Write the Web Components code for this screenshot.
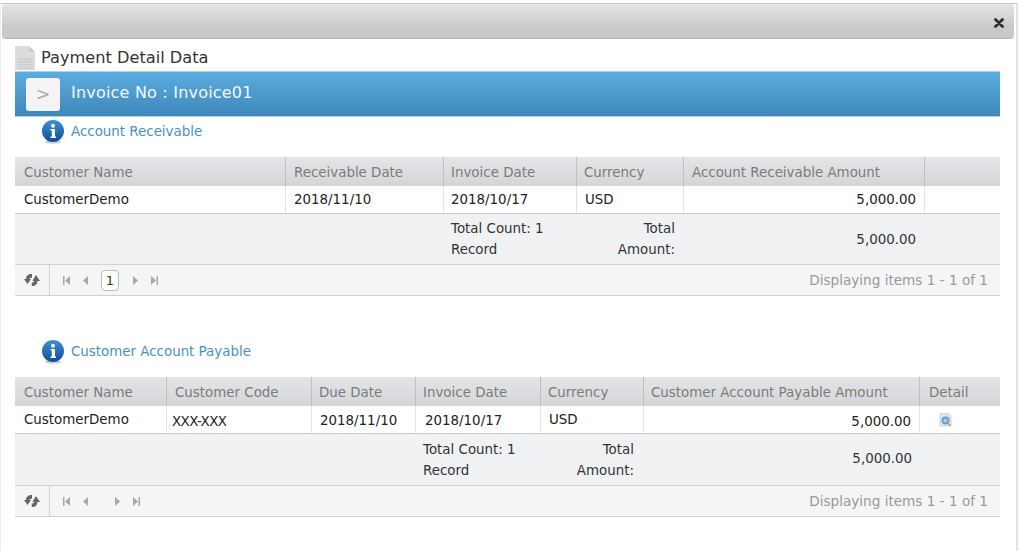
<!DOCTYPE html>
<html><head><meta charset="utf-8"><style>
html,body{margin:0;padding:0;background:#fff;height:100%;overflow:hidden}
body{font-family:"DejaVu Sans",sans-serif}
</style></head><body>
<x-dialog>
  <x-doc-title>Payment Detail Data</x-doc-title>
  <x-invoice-bar>Invoice No : Invoice01</x-invoice-bar>
  <x-section style="--top:3px;--h:24px">Account Receivable</x-section>
  <x-grid cols="271px 158px 133px 107px 241px 75px" style="--gtop:13px">
    <x-row kind="head"><x-cell style="--pl:9px">Customer Name</x-cell><x-cell>Receivable Date</x-cell><x-cell style="--pl:7px">Invoice Date</x-cell><x-cell style="--pl:7px">Currency</x-cell><x-cell>Account Receivable Amount</x-cell><x-cell></x-cell></x-row>
    <x-row kind="body"><x-cell style="--pl:9px">CustomerDemo</x-cell><x-cell>2018/11/10</x-cell><x-cell style="--pl:7px">2018/10/17</x-cell><x-cell>USD</x-cell><x-cell align="right">5,000.00</x-cell><x-cell></x-cell></x-row>
    <x-row kind="foot"><x-cell></x-cell><x-cell></x-cell><x-cell style="--pl:7px">Total Count: 1 Record</x-cell><x-cell align="right">Total Amount:</x-cell><x-cell align="right" mid>5,000.00</x-cell><x-cell></x-cell></x-row>
    <x-pager page="1">Displaying items 1 - 1 of 1</x-pager>
  </x-grid>
  <x-section style="--top:44px;--h:24px">Customer Account Payable</x-section>
  <x-grid cols="152px 145px 104px 125px 103px 276px 80px" style="--gtop:13px">
    <x-row kind="head"><x-cell style="--pl:9px">Customer Name</x-cell><x-cell>Customer Code</x-cell><x-cell style="--pl:7px">Due Date</x-cell><x-cell style="--pl:7px">Invoice Date</x-cell><x-cell style="--pl:7px">Currency</x-cell><x-cell style="--pl:7px">Customer Account Payable Amount</x-cell><x-cell style="--pl:9px">Detail</x-cell></x-row>
    <x-row kind="body"><x-cell style="--pl:9px">CustomerDemo</x-cell><x-cell style="--nudge:2px;--pl:5px;--ls:-.6px">XXX-XXX</x-cell><x-cell style="--nudge:1px">2018/11/10</x-cell><x-cell style="--nudge:1px;--pl:9px">2018/10/17</x-cell><x-cell>USD</x-cell><x-cell align="right" style="--nudge:2px">5,000.00</x-cell><x-cell><x-detail-icon></x-detail-icon></x-cell></x-row>
    <x-row kind="foot" style="height:51px"><x-cell></x-cell><x-cell></x-cell><x-cell></x-cell><x-cell style="--pl:7px;--nudge:1px">Total Count: 1 Record</x-cell><x-cell align="right" style="--pr:9px;--nudge:1px">Total Amount:</x-cell><x-cell align="right" mid style="--pr:7px;--mt:16px">5,000.00</x-cell><x-cell></x-cell></x-row>
    <x-pager>Displaying items 1 - 1 of 1</x-pager>
  </x-grid>
</x-dialog>
<script>
function def(name, html, extra){
  const t=document.createElement('template');t.innerHTML=html;
  customElements.define(name,class extends HTMLElement{
    constructor(){super();this.attachShadow({mode:'open'}).appendChild(t.content.cloneNode(true));}
    connectedCallback(){extra&&extra(this);}
  });
}
def('x-dialog',`<style>
:host{display:block;box-sizing:border-box;width:1018px;height:548px;margin-top:3px;border-top:1px solid #c8c8c8;border-right:2px solid #e2e2e2;border-left:1px solid #eee;padding:0 0 0 1px}
.bar{height:35px;width:1012px;box-sizing:border-box;border-radius:4px;border-bottom:1px solid #b4b4b4;background:linear-gradient(#e4e4e4,#c9c9c9 70%);display:flex;align-items:center;justify-content:flex-end;padding:3px 10px 0 0}
.main{padding:0 14px 0 13px}
svg{display:block}
</style><div class="bar"><svg width="10" height="10" viewBox="0 0 10 10"><path d="M1.5 1.5 8.5 8.5M8.5 1.5 1.5 8.5" stroke="#2e2e2e" stroke-width="2.8" stroke-linecap="round"/></svg></div><div class="main"><slot></slot></div>`);
def('x-doc-title',`<style>
:host{display:flex;align-items:center;gap:6px;height:25px;margin-top:7px;font-size:16.2px;color:#333}
svg{display:block;margin-top:-1px}
</style><svg width="20" height="24" viewBox="0 0 20 24"><path d="M0 0H13L20 7V24H0Z" fill="#dcdcdc"/><path d="M14 0 20 6H14Z" fill="#c9c9c9"/><path d="M2 13H18M2 16H18M2 19H18M2 22H18" stroke="#c4c4c4"/></svg><span style="position:relative;top:-1px"><slot></slot></span>`);
def('x-invoice-bar',`<style>
:host{display:flex;align-items:center;height:46px;box-sizing:border-box;width:985px;gap:11px;padding-left:11px;background:linear-gradient(#5dade0,#3d87ba);border-top:1px solid #a9d3ee;border-bottom:1px solid #a9d3ee;color:#f2f8fc;font-size:16px;letter-spacing:.2px}
.b{width:34px;height:33px;border-radius:3px;background:#f4f4f4;color:#aaa;display:flex;align-items:center;justify-content:center;font-size:17px;letter-spacing:0}
span{margin-top:-3px}
</style><div class="b">&gt;</div><span><slot></slot></span>`);
def('x-section',`<style>
:host{display:flex;align-items:center;gap:7px;margin-top:var(--top);margin-left:27px;height:var(--h);font-size:13.4px;color:#4a90c2}
svg{display:block}
span{margin-top:-1px}
</style><svg width="22" height="24" viewBox="0 0 22 24"><defs><linearGradient id="g" x1="0" y1="0" x2="0" y2="1"><stop offset="0" stop-color="#3f8fd6"/><stop offset="1" stop-color="#0c4f96"/></linearGradient></defs><ellipse cx="11" cy="22" rx="8" ry="1.6" fill="#c9c9c9"/><circle cx="11" cy="11" r="11" fill="url(#g)"/><circle cx="11" cy="5.7" r="2" fill="#fff"/><path d="M8.5 9H13V16.5H14V18H8.5V16.5H9.8V10.5H8.5Z" fill="#fff"/></svg><span><slot></slot></span>`);
def('x-grid',`<style>
:host{display:block;width:985px;margin-top:var(--gtop);font-size:13.4px}
</style><slot></slot>`,el=>el.style.setProperty('--cols',el.getAttribute('cols')));
def('x-row',`<style>
:host{display:grid;grid-template-columns:var(--cols);box-sizing:border-box}
:host([kind=head]){height:29px;background:linear-gradient(#e4e5e7,#d3d5d8);color:#7b7b7b;--sep:#bdbfc2;--py:8px}
:host([kind=body]){height:28px;background:#fff;color:#222;border-bottom:1px solid #c9cbcd;--sep:#e2e2e2;--py:6px}
:host([kind=foot]){height:50px;background:#f0f1f3;color:#333;--py:4px;--lh:21px}
</style><slot></slot>`);
def('x-cell',`<style>
:host{display:block;box-sizing:border-box;min-width:0;border-right:1px solid var(--sep,transparent);padding:calc(var(--py,5px) + var(--nudge,0px)) var(--pr,8px) 0 var(--pl,8px);line-height:var(--lh,16px);letter-spacing:var(--ls,normal)}
:host(:last-child){border-right:0}
:host([align=right]){text-align:right}
:host([mid]){padding-top:var(--mt,17px);line-height:18px}
</style><slot></slot>`);
def('x-detail-icon',`<style>
:host{display:block;margin:1px 0 0 11px;width:13px;height:14px}
svg{display:block}
</style><svg width="13" height="14" viewBox="0 0 13 14"><path d="M1 0H9L12 3V13H1Z" fill="#dfe4ea" stroke="#b9c2cc" stroke-width=".6"/><circle cx="6.5" cy="7.5" r="4" fill="#6f9fcb"/><circle cx="6.5" cy="7.5" r="2" fill="#a9c9e6"/><path d="M9 10.5 12 13" stroke="#c9a45a" stroke-width="1.4"/></svg>`);
def('x-pager',`<style>
:host{display:flex;align-items:stretch;box-sizing:border-box;height:32px;background:#f4f5f6;border-top:1px solid #cfd1d3;border-bottom:1px solid #cfd1d3;color:#999;font-size:13.6px}
.r{width:34px;border-right:1px solid #cfd1d3;display:flex;align-items:center;justify-content:center}
.n{display:flex;align-items:center;margin-left:13px;flex:1}
.p{box-sizing:border-box;width:18px;height:21px;margin:0 14px 0 13px;border:1px solid #bbb;border-radius:4px;background:#fff;color:#333;font-size:13px;display:flex;align-items:center;justify-content:center}
.s{width:27px}
.t{align-self:center;margin-right:12px}
svg{display:block}
</style><div class="r"><svg width="16" height="12" viewBox="0 0 16 12" fill="#666"><path d="M8 0C4 0 2 2 2 5H0L3.5 10 7 5H5.4C5.6 4 6.4 3.6 8 4Z"/><path d="M7.8 12C11.5 12 13.4 10 13.4 7H16L12 1 8.4 7H10.2C10.2 8 9.4 8.6 7.8 8.4Z"/></svg></div>
<div class="n"><svg width="7" height="9" viewBox="0 0 7 9" fill="#a8a8a8"><rect width="1.5" height="9"/><path d="M7 0V9L2 4.5Z"/></svg><svg width="6" height="9" viewBox="0 0 6 9" fill="#a8a8a8" style="margin-left:12px"><path d="M6 0V9L1 4.5Z"/></svg><span id="slotp"></span><svg width="6" height="9" viewBox="0 0 6 9" fill="#a8a8a8"><path d="M0 0V9L5 4.5Z"/></svg><svg width="7" height="9" viewBox="0 0 7 9" fill="#a8a8a8" style="margin-left:12px"><path d="M0 0V9L5 4.5Z"/><rect x="5.5" width="1.5" height="9"/></svg></div><div class="t"><slot></slot></div>`,el=>{
  const s=el.shadowRoot.getElementById('slotp');
  const pg=el.getAttribute('page');
  s.className=pg?'p':'s';
  if(pg)s.textContent=pg;
});
</script>
</body></html>
